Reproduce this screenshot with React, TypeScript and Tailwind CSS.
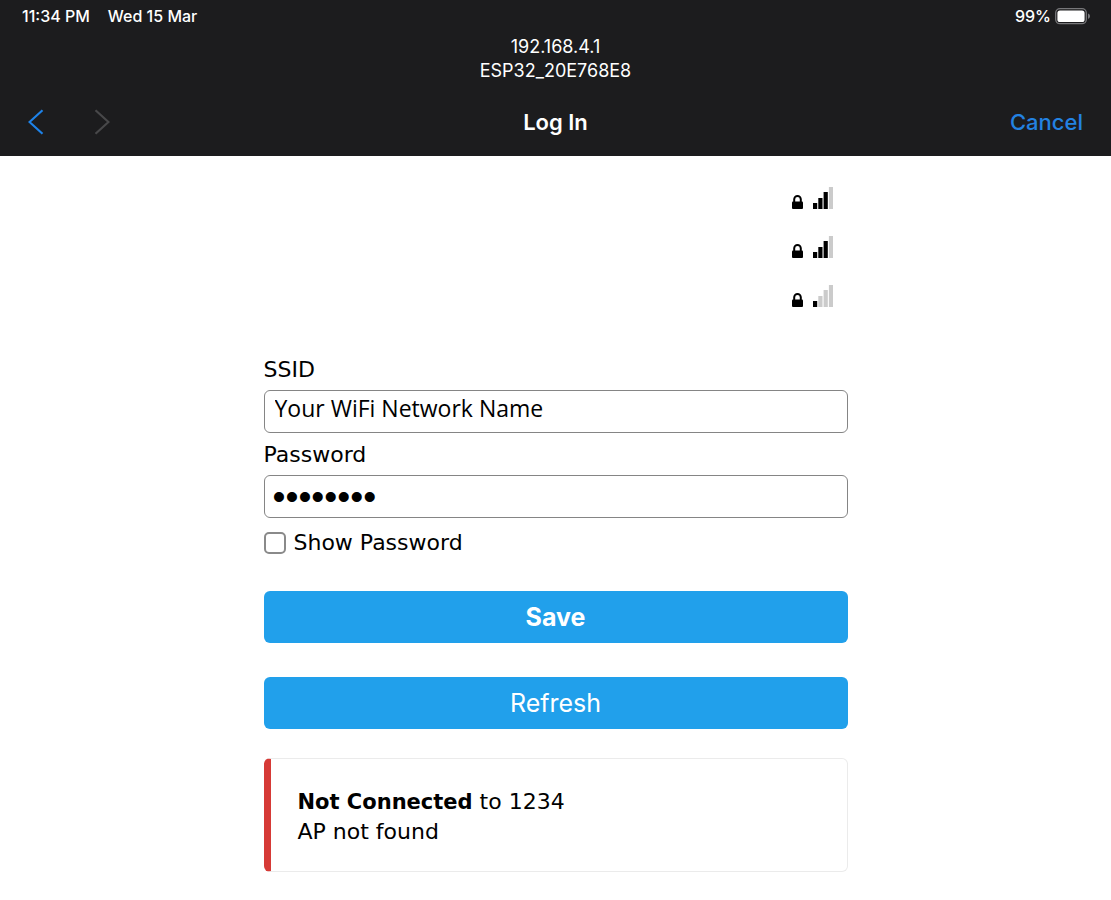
import { useState } from "react";

const networks = [{ strength: 3 }, { strength: 3 }, { strength: 1 }];

function LockIcon() {
  return (
    <svg width="11" height="14" viewBox="0 0 11 14" aria-hidden="true">
      <path d="M2.2 7.5V4.3a3.3 3.3 0 0 1 6.6 0V7.5" fill="none" stroke="#000" strokeWidth="2" />
      <rect x="0" y="6.4" width="11" height="7.6" rx="1" fill="#000" />
    </svg>
  );
}

function SignalIcon({ strength }: { strength: number }) {
  const heights = [6, 11, 17, 22];
  return (
    <svg width="20" height="22" viewBox="0 0 20 22" role="img" aria-label={`Signal ${strength} of 4`}>
      {heights.map((h, i) => (
        <rect
          key={h}
          x={i * 5.3}
          y={22 - h}
          width="4.2"
          height={h}
          fill={i < strength ? "#000" : "#cbcbcb"}
        />
      ))}
    </svg>
  );
}

function BatteryIcon() {
  return (
    <svg width="36" height="17" viewBox="0 0 36 17" role="img" aria-label="Battery">
      <rect x="0.7" y="0.7" width="30.6" height="15" rx="4.2" fill="none" stroke="#77777a" strokeWidth="1.3" />
      <rect x="2.4" y="2.4" width="27.2" height="11.6" rx="2.6" fill="#fff" />
      <path d="M33 5.6c1.3.4 2 1.4 2 2.6s-.7 2.2-2 2.6z" fill="#77777a" />
    </svg>
  );
}

function Chevron({ forward = false }: { forward?: boolean }) {
  return (
    <svg width="16" height="26" viewBox="0 0 16 26" aria-hidden="true">
      <path
        d={forward ? "M1.5 1.2L14.5 13L1.5 24.8" : "M14.5 1.2L1.5 13L14.5 24.8"}
        fill="none"
        stroke="currentColor"
        strokeWidth="2.2"
      />
    </svg>
  );
}

function Header() {
  return (
    <header className="bg-[#1c1c1e] font-[Inter,sans-serif] text-white">
      <div className="flex h-8 items-center justify-between pr-5 pl-[22px] text-base font-medium">
        <div className="flex gap-[18px]">
          <span>11:34 PM</span>
          <span>Wed 15 Mar</span>
        </div>
        <div className="flex items-center gap-1">
          <span>99%</span>
          <BatteryIcon />
        </div>
      </div>
      <div className="pt-[3px] text-center text-lg leading-6">
        <p>192.168.4.1</p>
        <p>ESP32_20E768E8</p>
      </div>
      <nav className="grid grid-cols-3 items-center px-7 pt-[21px] pb-4 text-[22px] leading-9">
        <div className="flex gap-[50px]">
          <button type="button" aria-label="Back" className="text-[#1e82e8]">
            <Chevron />
          </button>
          <button type="button" aria-label="Forward" disabled className="text-[#48484a]">
            <Chevron forward />
          </button>
        </div>
        <h1 className="text-center font-semibold">Log In</h1>
        <button type="button" className="justify-self-end font-medium text-[#2382e2]">
          Cancel
        </button>
      </nav>
    </header>
  );
}

export default function App() {
  const [ssid, setSsid] = useState("Your WiFi Network Name");
  const [password, setPassword] = useState("password");
  const [visible, setVisible] = useState(false);

  return (
    <div className="min-h-screen bg-white text-black">
      <Header />
      <main className="mx-auto w-full max-w-[584px] pt-[17px] pb-7 font-['DejaVu_Sans',sans-serif] text-[22px]">
        <ul>
          {networks.map((network, i) => (
            <li key={i} className="flex h-[49px] items-center justify-end pr-[15px]">
              <div className="flex items-end gap-2.5">
                <LockIcon />
                <SignalIcon strength={network.strength} />
              </div>
            </li>
          ))}
        </ul>
        <form className="flex flex-col pt-9" onSubmit={(e) => e.preventDefault()}>
          <label htmlFor="ssid" className="pb-1.5 leading-7">
            SSID
          </label>
          <input
            id="ssid"
            value={ssid}
            onChange={(e) => setSsid(e.target.value)}
            className="h-[43px] rounded-md border border-[#858585] px-2.5 pb-2 font-['Open_Sans',sans-serif] text-[23px]"
          />
          <label htmlFor="password" className="pt-2 pb-1.5 leading-7">
            Password
          </label>
          <input
            id="password"
            type={visible ? "text" : "password"}
            value={password}
            onChange={(e) => setPassword(e.target.value)}
            className={
              visible
                ? "h-[43px] rounded-md border border-[#858585] px-2 text-[22px]"
                : "h-[43px] rounded-md border border-[#858585] px-2 font-['Liberation_Sans',sans-serif] text-[37px]"
            }
          />
          <label className="flex items-center gap-2 pt-[11px] leading-7">
            <input
              type="checkbox"
              checked={visible}
              onChange={(e) => setVisible(e.target.checked)}
              className="size-[22px] appearance-none rounded-[5px] border-2 border-[#8a8a8a] checked:bg-[#1fa1ec]"
            />
            Show Password
          </label>
          <button
            type="submit"
            className="mt-[34px] h-[52px] rounded-md bg-[#21a0eb] pt-0.5 font-[Inter,sans-serif] text-[25px] font-bold text-white"
          >
            Save
          </button>
          <button
            type="button"
            className="mt-[34px] h-[52px] rounded-md bg-[#21a0eb] pt-0.5 font-[Inter,sans-serif] text-[25px] text-white"
          >
            Refresh
          </button>
        </form>
        <div
          role="status"
          className="mt-[29px] rounded-md border border-l-[7px] border-[#ebebeb] border-l-[#d63a36] px-[27px] pt-7 pb-[25px] leading-[29px]"
        >
          <p>
            <strong className="text-[21px]">Not Connected</strong> to 1234
          </p>
          <p>AP not found</p>
        </div>
      </main>
    </div>
  );
}
